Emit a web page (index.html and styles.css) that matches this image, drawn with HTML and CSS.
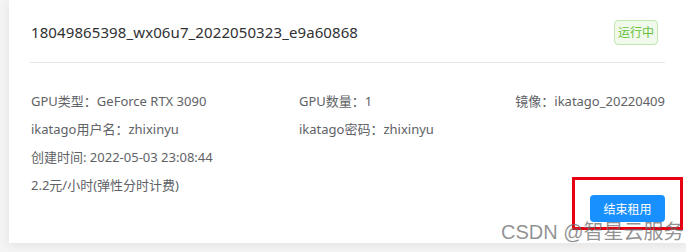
FILE: index.html
```html
<!DOCTYPE html>
<html lang="zh">
<head>
<meta charset="utf-8">
<link rel="stylesheet" href="styles.css">
</head>
<body>
<div class="page">
  <div class="card">
    <div class="card-header">
      <span class="title">18049865398_wx06u7_2022050323_e9a60868</span>
      <span class="tag">运行中</span>
    </div>
    <div class="card-body">
      <div class="info-grid">
        <span>GPU类型：GeForce RTX 3090</span>
        <span>GPU数量：1</span>
        <span class="right">镜像：ikatago_20220409</span>
        <span>ikatago用户名：zhixinyu</span>
        <span>ikatago密码：zhixinyu</span>
        <span></span>
        <span>创建时间: 2022-05-03 23:08:44</span>
        <span></span>
        <span></span>
      </div>
      <div class="footer-row">
        <span>2.2元/小时(弹性分时计费)</span>
        <button class="btn-end">结束租用</button>
      </div>
    </div>
    <div class="highlight"></div>
  </div>
  <div class="watermark">CSDN @智星云服务</div>
</div>
</body>
</html>
```

FILE: styles.css
```css
html, body {
  margin: 0;
  padding: 0;
}
body {
  background: #f4f4f5;
  font-family: "Noto Sans", "Noto Sans CJK SC", sans-serif;
  width: 686px;
  height: 252px;
  overflow: hidden;
}
.page {
  position: relative;
  width: 686px;
  height: 252px;
}
.card {
  position: relative;
  margin-left: 9px;
  width: 677px;
  height: 243px;
  background: #ffffff;
  box-shadow: 0 2px 10px rgba(0, 0, 0, 0.08);
  padding: 0 21px;
  box-sizing: border-box;
}
.card-header {
  height: 63px;
  border-bottom: 1px solid #e6e6e6;
  display: flex;
  align-items: center;
  justify-content: space-between;
  padding-left: 1px;
  padding-right: 7px;
  padding-top: 2px;
  box-sizing: border-box;
}
.title {
  font-size: 15px;
  letter-spacing: 0.1px;
  color: #303133;
}
.tag {
  height: 25px;
  line-height: 23px;
  padding: 0 3px;
  box-sizing: border-box;
  font-size: 12px;
  color: #67c23a;
  background: #f0f9eb;
  border: 1px solid #c2e7b0;
  border-radius: 4px;
}
.card-body {
  padding-top: 24px;
  padding-left: 1px;
  font-size: 13px;
  color: #606266;
}
.info-grid {
  display: grid;
  grid-template-columns: 268px 1fr auto;
  grid-auto-rows: 28px;
  line-height: 28px;
}
.right {
  text-align: right;
}
.footer-row {
  display: flex;
  justify-content: space-between;
  align-items: flex-start;
  line-height: 28px;
}
.btn-end {
  margin-top: 24px;
  width: 75px;
  height: 27px;
  border: none;
  border-radius: 4px;
  background: #1890ff;
  color: #ffffff;
  font-family: "Noto Sans", "Noto Sans CJK SC", sans-serif;
  font-size: 12px;
  padding: 0;
}
.highlight {
  position: absolute;
  left: 563px;
  top: 177px;
  width: 111px;
  height: 53px;
  border: 3px solid #e60012;
  box-sizing: border-box;
}
.watermark {
  position: absolute;
  left: 501px;
  top: 220px;
  white-space: nowrap;
  font-family: "Liberation Sans", "Noto Sans CJK SC", sans-serif;
  font-size: 20px;
  line-height: 24px;
  color: rgba(110, 110, 110, 0.75);
}
```
